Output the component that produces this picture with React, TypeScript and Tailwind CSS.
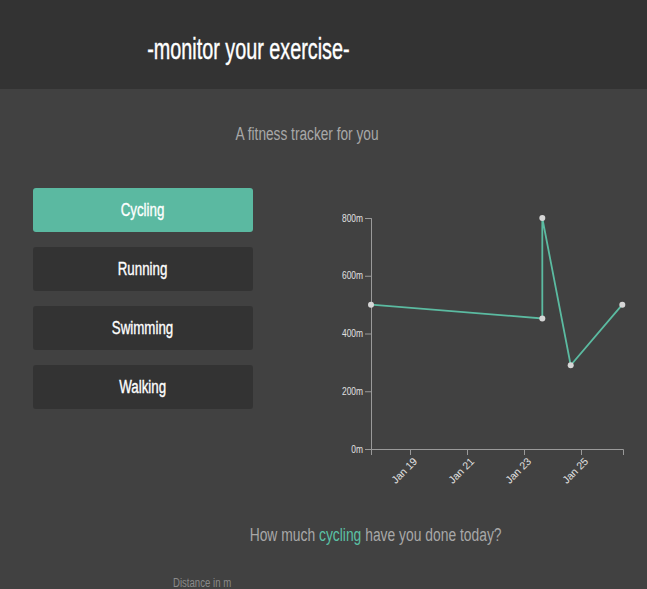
const font = "font-['Liberation_Sans',Arial,sans-serif]"

const activities = ["Cycling", "Running", "Swimming", "Walking"]

// chart geometry, local to the svg box
const yOf = (v: number) => 261 - (v * 231) / 800
const yTicks = [0, 200, 400, 600, 800]
const xTicks = [
  { x: 90, label: "Jan 19" },
  { x: 147, label: "Jan 21" },
  { x: 204, label: "Jan 23" },
  { x: 261, label: "Jan 25" },
]
const points = [
  { x: 51, v: 500 },
  { x: 222.3, v: 452 },
  { x: 222.3, v: 800 },
  { x: 250.7, v: 290 },
  { x: 302.3, v: 500 },
]

function Chart() {
  const d = points.map((p, i) => `${i ? "L" : "M"}${p.x},${yOf(p.v)}`).join("")
  return (
    <svg width="320" height="300" className="ml-[67px] shrink-0">
      <g stroke="#9a9a9a" fill="none" strokeWidth="1">
        <path d="M45,30.5H51.5V261.5H45" />
        <path d="M51.5,267V261.5H303.5V267" />
        {yTicks.map((t) => (
          <line key={t} x1="45" x2="51.5" y1={yOf(t) + 0.5} y2={yOf(t) + 0.5} />
        ))}
        {xTicks.map((t) => (
          <line key={t.label} x1={t.x + 0.5} x2={t.x + 0.5} y1="261.5" y2="267" />
        ))}
      </g>
      <g fill="#e0e0e0" fontSize="10.5" fontFamily="'Liberation Sans', Arial, sans-serif">
        {yTicks.map((t) => (
          <text key={t} textAnchor="end" transform={`translate(43,${yOf(t) + 3.5}) scale(0.8,1)`}>
            {t}m
          </text>
        ))}
        {xTicks.map((t) => (
          <text key={t.label} textAnchor="end" transform={`translate(${t.x + 8},274) rotate(-45)`}>
            {t.label}
          </text>
        ))}
      </g>
      <path d={d} fill="none" stroke="#5bbba1" strokeWidth="1.8" />
      {points.map((p, i) => (
        <circle key={i} cx={p.x} cy={yOf(p.v)} r="3" fill="#d6d6d6" />
      ))}
    </svg>
  )
}

export default function App() {
  return (
    <div className={`min-h-screen bg-[#414141] ${font} overflow-hidden`}>
      <header className="h-[89px] bg-[#333333] pt-[34px] pr-[151px] text-center">
        <h1 className="inline-block scale-x-[0.66] text-[30px] leading-[30px] text-white whitespace-nowrap [-webkit-text-stroke:0.4px_white]">
          -monitor your exercise-
        </h1>
      </header>

      <p className="mt-[36px] pr-[33px] text-center text-[18px] leading-[18px] text-[#a8a8a8]">
        <span className="inline-block scale-x-[0.76] whitespace-nowrap">A fitness tracker for you</span>
      </p>

      <div className="mt-[45px] flex items-start">
        <div className="ml-[33px] flex w-[220px] shrink-0 flex-col gap-[15px]">
          {activities.map((a, i) => (
            <button
              key={a}
              className={`flex h-[44px] items-center justify-center rounded-[3px] text-[18px] text-white ${
                i === 0 ? "bg-[#5bb9a1]" : "bg-[#333333]"
              }`}
            >
              <span className="inline-block scale-x-[0.74] [-webkit-text-stroke:0.35px_white]">{a}</span>
            </button>
          ))}
        </div>
        <Chart />
      </div>

      <p className="mt-[38px] pl-[105px] text-center text-[18px] leading-[18px] text-[#a8a8a8]">
        <span className="inline-block scale-x-[0.77] whitespace-nowrap">
          How much <span className="text-[#5bc0a5]">cycling</span> have you done today?
        </span>
      </p>

      <label className="mt-[33px] ml-[173px] block text-[12px] leading-[12px] text-[#8a8a8a]">
        <span className="inline-block origin-left scale-x-[0.8] whitespace-nowrap">Distance in m</span>
      </label>
    </div>
  )
}
